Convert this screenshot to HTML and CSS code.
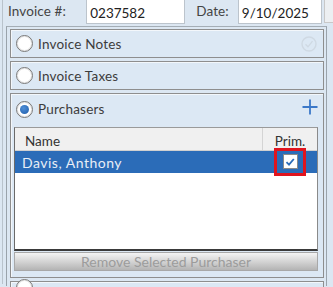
FILE: index.html
```html
<!DOCTYPE html>
<html>
<head>
<meta charset="utf-8">
<link rel="stylesheet" href="styles.css">
</head>
<body>
<div class="frame">
  <div class="toprow">
    <span class="lbl lbl-inv">Invoice #:</span>
    <div class="field f-inv">0237582</div>
    <span class="lbl lbl-date">Date:</span>
    <div class="field f-date">9/10/2025</div>
    <div class="cal"></div>
  </div>
  <div class="panel">
    <div class="section">
      <div class="sechead">
        <span class="radio"></span>
        <span class="title">Invoice Notes</span>
        <svg class="okicon" width="16" height="16" viewBox="0 0 16 16"><circle cx="8" cy="8" r="7" fill="none" stroke="#cfd9e3" stroke-width="1.4"/><path d="M4.5 8.3 L7 10.8 L11.5 5.2" fill="none" stroke="#cfd9e3" stroke-width="1.3"/></svg>
      </div>
    </div>
    <div class="section">
      <div class="sechead">
        <span class="radio"></span>
        <span class="title">Invoice Taxes</span>
      </div>
    </div>
    <div class="section open">
      <div class="sechead">
        <span class="radio on"></span>
        <span class="title">Purchasers</span>
        <svg class="plus" width="16" height="16" viewBox="0 0 16 16"><path d="M8 0.5 V15.5 M0.5 8 H15.5" stroke="#3b78c8" stroke-width="1.8"/></svg>
      </div>
      <div class="grid">
        <div class="ghead">
          <div class="c-name">Name</div>
          <div class="c-prim">Prim.</div>
        </div>
        <div class="grow sel">
          <div class="c-name">Davis, Anthony</div>
          <div class="c-prim"><span class="hl"><span class="chk"><svg width="12" height="12" viewBox="0 0 12 12"><path d="M2.5 6.2 L5 8.6 L9.8 3" fill="none" stroke="#2b6cb8" stroke-width="1.8"/></svg></span></span></div>
        </div>
      </div>
      <div class="btn">Remove Selected Purchaser</div>
    </div>
    <div class="section last">
      <div class="sechead"><span class="radio"></span></div>
    </div>
  </div>
</div>
</body>
</html>
```
FILE: styles.css
```css
html, body { margin: 0; padding: 0; }
body {
  width: 333px; height: 287px; overflow: hidden;
  background: #dce7f2;
  font-family: "Lato", "Open Sans", sans-serif;
  color: #3a3a3a;
}
.frame {
  height: 287px;
  border-left: 1px solid #b9c3cc;
  margin-left: 2px;
  box-sizing: border-box;
}
.toprow {
  display: flex; align-items: center;
  height: 28px; margin-top: -3px;
}
.lbl { font-size: 13.5px; color: #444; letter-spacing: 0.1px; }
.lbl-inv { margin-left: 5px; width: 79px; }
.lbl-date { margin-left: 11px; width: 42px; }
.field {
  background: #fff; border: 1px solid #bcc4cc;
  height: 26px; box-sizing: border-box;
  font-size: 13.5px; color: #222;
  display: flex; align-items: center; padding: 3px 0 0 3px;
}
.f-inv { width: 100px; }
.f-date { width: 85px; }
.cal { width: 8px; height: 22px; margin-left: 2px; border: 1px solid #c8c8c8; border-right: none; background: #eceff2; }
.panel {
  margin-left: 3px; margin-top: 1px;
  width: 321px;
  border: 1px solid #9aa3ab; border-bottom: none;
  border-top-color: #a4adb5;
  padding: 2px 0 0 3px;
  height: 260px; box-sizing: border-box;
}
.section {
  width: 314px; box-sizing: border-box;
  border: 1px solid #8e8e8e;
  box-shadow: inset 1px 1px 0 #f3f7fb;
  background: #dce8f4;
  margin-bottom: 3px;
}
.sechead {
  height: 27px; display: flex; align-items: center;
  padding-left: 5px; position: relative;
}
.radio {
  width: 15px; height: 15px; border-radius: 50%;
  border: 1px solid #777; background: #fff;
  box-shadow: inset 0 0 0 1px #e6e6e6;
  flex: none; position: relative;
}
.radio.on::after {
  content: ""; position: absolute; left: 3px; top: 3px;
  width: 9px; height: 9px; border-radius: 50%;
  background: radial-gradient(circle at 40% 35%, #4f8fd8, #1f5ca8);
}
.title { margin-left: 5px; font-size: 13.5px; color: #3c3c3c; letter-spacing: 0.2px; }
.okicon { margin-left: auto; margin-right: 6px; }
.plus { margin-left: auto; margin-right: 5px; margin-top: -4px; }
.open .sechead { height: 30px; }
.grid {
  margin: 3px 5px 0 3px;
  background: #fff;
  border: 1px solid #6a6a6a; border-top-color: #9a9a9a; border-right-color: #8a8a8a;
  border-bottom: 2px solid #3a3a3a;
  height: 124px; box-sizing: border-box;
}
.ghead, .grow { display: flex; }
.ghead {
  height: 23px; background: #f0f0f0;
  border-bottom: 1px solid #d0d0d0; box-sizing: border-box;
  font-size: 13.5px; color: #333;
}
.ghead .c-name { flex: 1; padding-left: 10px; border-right: 1px solid #d4d4d4; display: flex; align-items: center; padding-top: 3px; }
.ghead .c-prim { width: 54px; display: flex; align-items: center; justify-content: center; padding-top: 3px; }
.grow.sel { height: 22px; background: #2b6cb8; color: #e8eef6; font-size: 14px; letter-spacing: 0.5px; }
.grow .c-name { flex: 1; padding-left: 7px; display: flex; align-items: center; }
.grow .c-prim { width: 54px; display: flex; align-items: center; justify-content: center; }
.hl {
  width: 32px; height: 28px; box-sizing: border-box;
  border: 3px solid #e0141e;
  display: flex; align-items: center; justify-content: center;
  margin-left: 0; margin-top: -1px;
  position: relative; z-index: 1;
}
.chk {
  width: 15px; height: 15px; box-sizing: border-box;
  background: #fff; border: 1px solid #8a8a8a;
  display: flex; align-items: center; justify-content: center;
}
.btn {
  margin: 1px 5px 0 3px; height: 19px;
  background: linear-gradient(#f4f4f4, #b4b4b4);
  border: 1px solid #a8a8a8; box-sizing: border-box;
  font-size: 14px; color: #9c9c9c; text-align: center; line-height: 18px;
  margin-bottom: 6px;
}
.last .sechead { height: 10px; }
```
